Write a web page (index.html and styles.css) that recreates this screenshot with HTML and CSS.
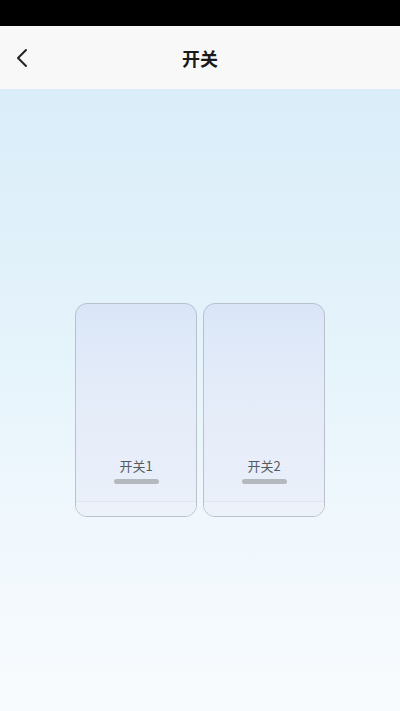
FILE: index.html
```html
<!DOCTYPE html>
<html lang="zh">
<head>
<meta charset="utf-8">
<link rel="stylesheet" href="styles.css">
</head>
<body>
<div class="app">
  <div class="status"></div>
  <header class="nav">
    <span class="back">
      <svg width="14" height="20" viewBox="0 0 14 20"><path d="M11 2 L3 10 L11 18" fill="none" stroke="#222" stroke-width="2" stroke-linecap="round" stroke-linejoin="round"/></svg>
    </span>
    <h1 class="title">开关</h1>
  </header>
  <main class="content">
    <div class="switches">
      <div class="card">
        <div class="label">开关1</div>
        <div class="bar"></div>
        <div class="foot"></div>
      </div>
      <div class="card">
        <div class="label">开关2</div>
        <div class="bar"></div>
        <div class="foot"></div>
      </div>
    </div>
  </main>
</div>
</body>
</html>
```
FILE: styles.css
```css
* { box-sizing: border-box; }
html, body { margin: 0; padding: 0; }
body {
  font-family: "Noto Sans CJK SC", "Noto Sans", sans-serif;
  width: 400px;
  height: 711px;
  overflow: hidden;
}
.app { display: flex; flex-direction: column; height: 711px; }
.status { height: 26px; background: #000; flex: none; }
.nav {
  height: 63px;
  flex: none;
  background: #f8f8f8;
  display: flex;
  align-items: center;
  justify-content: center;
  position: relative;
}
.back { position: absolute; left: 15px; top: 22px; display: flex; }
.title {
  margin: 0;
  font-size: 18px;
  font-weight: 700;
  color: #1a1a1a;
  line-height: 1;
  padding-top: 1px;
}
.content {
  flex: 1;
  background: linear-gradient(180deg, #daedf9 0%, #e6f4fb 45%, #f0f8fd 70%, #f8fbfe 100%);
  display: flex;
  justify-content: center;
  padding-top: 214px;
}
.switches { display: flex; gap: 6px; align-items: flex-start; }
.card {
  width: 122px;
  height: 214px;
  border: 1px solid #b9c0ca;
  border-radius: 12px;
  background: linear-gradient(180deg, #dae6f8 0%, #e4ecf9 40%, #ebf0fa 100%);
  display: flex;
  flex-direction: column;
  align-items: center;
  justify-content: flex-end;
  overflow: hidden;
}
.label {
  font-size: 13px;
  color: #555a60;
  line-height: 18px;
}
.bar {
  width: 45px;
  height: 5px;
  border-radius: 3px;
  background: #b4b8bf;
  margin-top: 4px;
  margin-bottom: 17px;
}
.foot {
  width: 100%;
  height: 15px;
  background: #edf1f9;
  border-top: 1px solid #dfe5ef;
}
```
